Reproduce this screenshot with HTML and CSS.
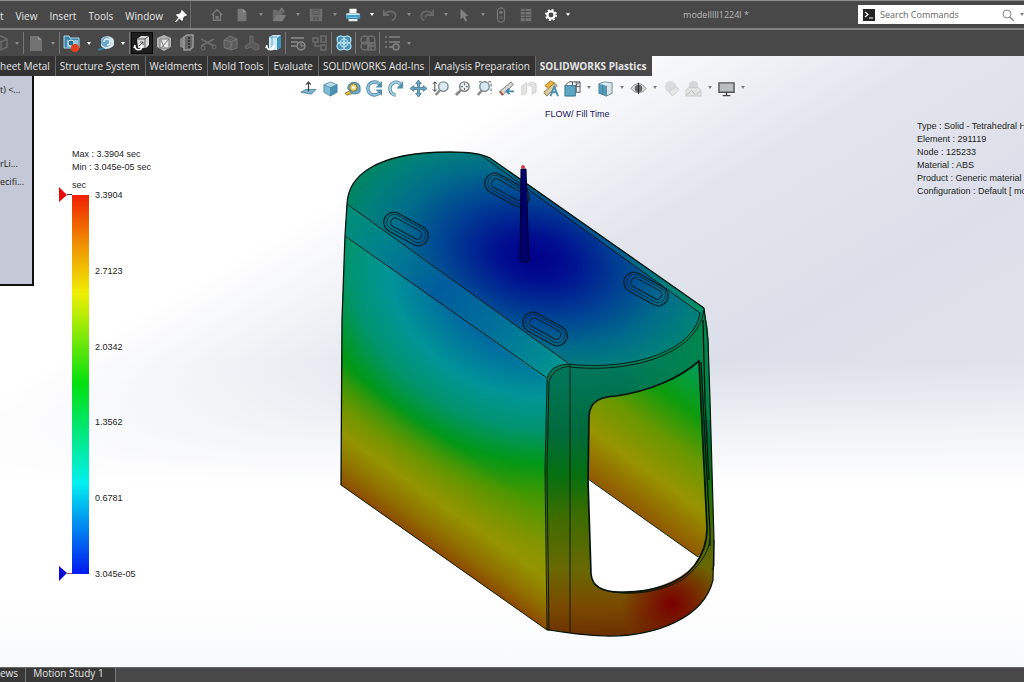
FILE: index.html
```html
<!DOCTYPE html>
<html lang="en">
<head>
  <meta charset="UTF-8">
  <meta name="viewport" content="width=device-width, initial-scale=1.0">
  <title>SOLIDWORKS Plastics</title>
  <link rel="stylesheet" href="styles.css">
</head>
<body>
  <header class="menubar">
    <nav class="menus">
      <a href="#">t</a>
      <a href="#">View</a>
      <a href="#">Insert</a>
      <a href="#">Tools</a>
      <a href="#">Window</a>
      <button class="pin" aria-label="Pin menu"><svg viewBox="0 0 12 12"><path d="M7 0l5 5-1 1-1-.3L8 8v2l-1 1-2.500-2.500L1 12l-1-.2L3.500 7.500 1 5l1-1h2l2.300-2L6 1z" fill="#fff"/></svg></button>
    </nav>
    <div class="quick">
      <div class="group home">
        <button class="icon" aria-label="Home"><svg viewBox="0 0 18 18"><path d="M3 9l6-6 6 6M5 8v7h3v-4h2v4h3V8" fill="none" stroke="#7a7a7a" stroke-width="1.500"/></svg></button>
      </div>
      <div class="group">
        <button class="icon" aria-label="New"><svg viewBox="0 0 18 18"><path d="M4 2h6l4 4v10H4z" fill="#777"/><path d="M10 2v4h4" fill="#999"/></svg></button>
        <button class="caret" aria-label="New options"></button>
        <button class="icon" aria-label="Open"><svg viewBox="0 0 18 18"><path d="M2 3h5l1 2h5v4H5l-3 6z" fill="#6a6a6a"/><path d="M5 9h12l-4 7H2z" fill="#7c7c7c"/><path d="M9 6l3-4 3 4" fill="none" stroke="#777" stroke-width="2"/></svg></button>
        <button class="caret" aria-label="Open options"></button>
        <button class="icon" aria-label="Save"><svg viewBox="0 0 18 18"><path d="M2 2h14v14H2z" fill="#6e6e6e"/><path d="M5 3h8v6H5zM6 11h6v4H6z" fill="#555"/><path d="M6 5h6M6 7h6M9 12v3" stroke="#7a7a7a"/></svg></button>
        <button class="caret" aria-label="Save options"></button>
        <button class="icon" aria-label="Print"><svg viewBox="0 0 18 18"><path d="M5 2h8v5H5z" fill="#fff"/><path d="M2 7h14l1 2H1z" fill="#cfe6f2"/><path d="M1 9h16v4H1z" fill="#3fa0cc"/><path d="M4 12h10v4H4z" fill="#e8f4fa"/><path d="M4 13h10" stroke="#246a8c"/></svg></button>
        <button class="caret on" aria-label="Print options"></button>
        <button class="icon" aria-label="Undo"><svg viewBox="0 0 18 18"><path d="M2 3v6h6M3 8c3-4 10-4 12 0 1 3-1 6-4 7" fill="none" stroke="#6c6c6c" stroke-width="2"/></svg></button>
        <button class="caret" aria-label="Undo options"></button>
        <button class="icon" aria-label="Redo"><svg viewBox="0 0 18 18"><path d="M16 3v6h-6M15 8C12 4 5 4 3 8c-1 3 0 6 3 7M7 12c0-3 3-4 6-3" fill="none" stroke="#686868" stroke-width="2"/></svg></button>
        <button class="caret" aria-label="Redo options"></button>
        <button class="icon" aria-label="Select"><svg viewBox="0 0 18 18"><path d="M5 2l9 8-4 .5 2.500 5-2 1-2.500-5L5 14z" fill="#828282"/></svg></button>
        <button class="caret" aria-label="Select options"></button>
      </div>
      <div class="group spaced">
        <button class="icon" aria-label="Rebuild"><svg viewBox="0 0 18 18"><rect x="5" y="1" width="8" height="16" rx="4" fill="none" stroke="#747474" stroke-width="1.500"/><circle cx="9" cy="6" r="2" fill="#747474"/><circle cx="9" cy="12" r="2" fill="#5e5e5e"/></svg></button>
        <button class="icon" aria-label="File properties"><svg viewBox="0 0 18 18"><path d="M3 2h12v14H3z" fill="#747474"/><path d="M3 5h12M3 9h12M3 12h12M8 2v14" stroke="#484848"/></svg></button>
        <button class="icon" aria-label="Options"><svg viewBox="0 0 18 18"><circle cx="9" cy="9" r="4" fill="none" stroke="#fff" stroke-width="2.500"/><circle cx="9" cy="9" r="5.700" fill="none" stroke="#fff" stroke-width="2" stroke-dasharray="2.240 2.240"/></svg></button>
      </div>
      <button class="caret on" aria-label="Options list"></button>
    </div>
    <h1 class="doc-name">modelllll1224l *</h1>
    <form class="search">
      <svg class="prompt" viewBox="0 0 12 12"><path d="M0 0h12v12H0z" fill="#222"/><path d="M2 3l3 2.500L2 8M6 9h4" fill="none" stroke="#fff" stroke-width="1.200"/></svg>
      <input type="text" placeholder="Search Commands" aria-label="Search Commands">
      <button type="button" class="find" aria-label="Search"><svg viewBox="0 0 12 12"><circle cx="5" cy="5" r="4" fill="none" stroke="#888"/><path d="M8 8l4 4" stroke="#888" stroke-width="1.500"/></svg></button>
      <button type="button" class="caret dark" aria-label="Search options"></button>
    </form>
  </header>

  <div class="ribbon">
    <button class="icon" aria-label="Study"><svg viewBox="0 0 18 18"><path d="M4 5l6-3 6 3v8l-6 3-6-3zM4 5l6 3 6-3M10 8v8" fill="none" stroke="#6a6a6a" stroke-width="1.500"/></svg></button>
    <button class="caret" aria-label="Study options"></button>
    <span class="sep"></span>
    <button class="icon" aria-label="New study"><svg viewBox="0 0 18 18"><path d="M3 2h8l4 4v11H3z" fill="#727272"/><path d="M11 2v4h4" fill="#909090"/></svg></button>
    <button class="caret" aria-label="New study options"></button>
    <span class="sep"></span>
    <button class="icon" aria-label="Capture"><svg viewBox="0 0 18 18"><path d="M1 2h5l1 2h9v10H1z" fill="#3f87a8"/><path d="M1 2h5l1 2h9v10H1z" fill="none" stroke="#a8d8ec"/><path d="M4 6h11v7H4z" fill="#8cc4dc"/><circle cx="8" cy="9" r="3" fill="#286c8e" stroke="#d6edf6"/><circle cx="12" cy="14" r="4" fill="#e8401c"/></svg></button>
    <button class="caret on" aria-label="Capture options"></button>
    <button class="icon" aria-label="Measure"><svg viewBox="0 0 18 18"><path d="M1 16l6-2" stroke="#2e7fa5" stroke-width="2"/><path d="M4 12V6c1-5 12-5 13 1v4c-2 3-6 4-9 4z" fill="#d4e6ee"/><circle cx="9" cy="8" r="5" fill="#68a8c8"/><path d="M7 8a3 3 0 1 1 3 3" fill="none" stroke="#e8f4fa" stroke-width="1.500"/></svg></button>
    <button class="caret on" aria-label="Measure options"></button>
    <span class="sep"></span>
    <button class="icon pressed" aria-label="Solid mesh"><svg viewBox="0 0 18 18"><path d="M4 5l4-3h8v9l-3 3H5z" fill="#d8d8d8"/><path d="M4 5h8v9M12 5l4-3M7 8h3v3M10 8l-4 4" fill="none" stroke="#555"/><path d="M2 12c0 5 7 5 7 0l-2 1M2 11l-1 3" fill="none" stroke="#fff" stroke-width="1.500"/></svg></button>
    <button class="icon" aria-label="Shell mesh"><svg viewBox="0 0 18 18"><path d="M2 4l7-3 7 3v9l-7 4-7-4z" fill="#b4b4b4"/><path d="M5 5h9v9H5z" fill="#e6e6e6" stroke="#777"/><path d="M6 14l8-9M6 6l3 7" fill="none" stroke="#777"/></svg></button>
    <button class="icon" aria-label="Insert"><svg viewBox="0 0 18 18"><path d="M3 5l6-4v14l-6-2z" fill="#858585"/><path d="M7 3l3-2h6v12l-3 3H7z" fill="#666" stroke="#999" stroke-width="1.500"/><path d="M12 3v12" stroke="#333" stroke-width="2" stroke-dasharray="2 1"/></svg></button>
    <button class="icon" aria-label="Cut"><svg viewBox="0 0 18 18"><path d="M2 5l13 7M2 12l13-7" stroke="#6e6e6e" stroke-width="1.500"/><circle cx="4" cy="14" r="2" fill="none" stroke="#6e6e6e"/><circle cx="15" cy="13" r="2" fill="none" stroke="#6e6e6e"/></svg></button>
    <button class="icon" aria-label="Cavity"><svg viewBox="0 0 18 18"><path d="M3 6l6-4 7 3v9l-6 2-7-3z" fill="#5c5c5c" stroke="#747474"/><path d="M3 6l7 2 6-3M10 8v8M3 13c2 3 5 2 6 0" fill="none" stroke="#7c7c7c"/></svg></button>
    <button class="icon" aria-label="Runner"><svg viewBox="0 0 18 18"><path d="M7 2h3v6l6 3v4l-4 1-4-3-5 2-1-3 5-3z" fill="#5a5a5a" stroke="#6a6a6a"/></svg></button>
    <button class="icon" aria-label="Flow"><svg viewBox="0 0 18 18"><path d="M4 3l4-2h8v12l-4 3H4z" fill="#cfe9f5"/><path d="M12 4l4-3v12l-4 3z" fill="#3c94bd"/><path d="M7 3v10M4 3h8" stroke="#5ba7c8"/><path d="M2 12c0 5 7 5 7 0l-2 1M2 11l-1 3" fill="none" stroke="#fff" stroke-width="1.500"/></svg></button>
    <span class="sep"></span>
    <button class="icon" aria-label="Batch"><svg viewBox="0 0 18 18"><path d="M2 4h13M2 8h7M2 12h5" stroke="#7c7c7c" stroke-width="2"/><circle cx="12" cy="12" r="4" fill="#505050" stroke="#8c8c8c" stroke-width="1.500"/><path d="M12 9v3h3" stroke="#8c8c8c" fill="none"/></svg></button>
    <button class="icon" aria-label="Compare"><svg viewBox="0 0 18 18"><path d="M2 4h5v4H2zM10 2h5v6h-5zM10 11h5v5h-5zM4 8v4h6" fill="none" stroke="#6c6c6c" stroke-width="1.500"/></svg></button>
    <span class="sep"></span>
    <button class="icon" aria-label="Flow results"><svg viewBox="0 0 18 18"><path d="M1 3l4-2 4 1 4-1 4 3-1 5 1 5-4 3-4-1-5 1-3-4 1-4z" fill="#4d8fae"/><g fill="none" stroke="#b5dff0"><circle cx="6" cy="6" r="4"/><circle cx="12" cy="6" r="4"/><circle cx="6" cy="12" r="4"/><circle cx="12" cy="12" r="4"/><circle cx="9" cy="9" r="4"/></g></svg></button>
    <span class="sep"></span>
    <button class="icon" aria-label="Pack results"><svg viewBox="0 0 18 18"><g fill="none" stroke="#707070" stroke-width="1.500"><circle cx="6" cy="6" r="4"/><circle cx="12" cy="6" r="4"/><circle cx="6" cy="12" r="4"/><path d="M9 9h7v7H9zM9 12h7M12 9v7"/></g></svg></button>
    <span class="sep"></span>
    <button class="icon" aria-label="Report"><svg viewBox="0 0 18 18"><path d="M2 3h2M6 3h11M2 8h2M6 8h11M2 13h2M6 13h4" stroke="#747474" stroke-width="2"/><circle cx="13" cy="13" r="3" fill="#505050" stroke="#808080" stroke-width="1.500"/></svg></button>
    <button class="caret" aria-label="Report options"></button>
  </div>

  <main class="stage">
    <nav class="tabs">
      <a href="#">heet Metal</a>
      <a href="#">Structure System</a>
      <a href="#">Weldments</a>
      <a href="#">Mold Tools</a>
      <a href="#">Evaluate</a>
      <a href="#">SOLIDWORKS Add-Ins</a>
      <a href="#">Analysis Preparation</a>
      <a href="#" class="active">SOLIDWORKS Plastics</a>
    </nav>

    <div class="viewport">
      <aside class="tree">
        <p>t) &lt;...</p>
        <p>rLi...</p>
        <p>ecifi...</p>
      </aside>

      <section class="legend">
        <p>Max : 3.3904 sec</p>
        <p>Min : 3.045e-05 sec</p>
        <p class="unit">sec</p>
        <div class="scale">
          <div class="marks">
            <svg viewBox="0 0 13 12"><path d="M0-2l8 8-8 7z" fill="#e80808"/><path d="M8 5.500h5" stroke="#333"/></svg>
            <svg viewBox="0 0 13 12"><path d="M0-2l8 7-8 8z" fill="#0808d8"/><path d="M8 5.500h5" stroke="#a04050"/></svg>
          </div>
          <div class="bar"></div>
          <ol class="ticks">
            <li>3.3904</li>
            <li>2.7123</li>
            <li>2.0342</li>
            <li>1.3562</li>
            <li>0.6781</li>
            <li>3.045e-05</li>
          </ol>
        </div>
      </section>

      <section class="scene">
        <div class="view-tools">
          <button class="icon" aria-label="Normal to"><svg viewBox="0 0 18 18"><path d="M1 13l5-3h11l-5 5z" fill="#7fb4cc" stroke="#4c8aa8"/><path d="M9 12V2M6.500 5L9 2l2.500 3" fill="none" stroke="#444" stroke-width="1.300"/></svg></button>
          <button class="icon" aria-label="Isometric"><svg viewBox="0 0 18 18"><path d="M2 5l7-3 7 3-7 3z" fill="#b5dcec"/><path d="M2 5l7 3v9l-7-4z" fill="#7dbdd8"/><path d="M16 5L9 8v9l7-4z" fill="#4a93b4"/><path d="M2 5l7-3 7 3v8l-7 4-7-4zM2 5l7 3 7-3M9 8v9" fill="none" stroke="#39738f" stroke-width=".7"/></svg></button>
          <button class="icon" aria-label="Measure"><svg viewBox="0 0 18 18"><path d="M1 14l6-3 3 3-7 2z" fill="#e8c050" stroke="#94792c"/><path d="M4 9c0-9 13-8 13-1v4c-1 3-7 3-9 2z" fill="#6ba9c5" stroke="#3f7c9a"/><circle cx="10" cy="8" r="4" fill="#e9cf6d" stroke="#866d27"/><circle cx="10" cy="8" r="1.500" fill="#fff"/></svg></button>
          <button class="icon" aria-label="Roll view"><svg viewBox="0 0 18 18"><path d="M14 4C9 0 2 3 2 9s7 9 12 5" fill="none" stroke="#477f9b" stroke-width="3.500"/><path d="M14 4C9 0 2 3 2 9s7 9 12 5" fill="none" stroke="#8ec2d9" stroke-width="2"/><path d="M17 1v7h-7zM17 17v-7h-7z" fill="#5391ae"/></svg></button>
          <button class="icon" aria-label="Rotate view"><svg viewBox="0 0 18 18"><path d="M13 4C8 0 2 4 2 9c0 4 3 7 6 7" fill="none" stroke="#477f9b" stroke-width="3.500"/><path d="M13 4C8 0 2 4 2 9c0 4 3 7 6 7" fill="none" stroke="#a5d3e6" stroke-width="2"/><path d="M16 1v8H9z" fill="#5391ae"/></svg></button>
          <button class="icon" aria-label="Pan"><svg viewBox="0 0 18 18"><path d="M9 0l3 4h-2v4h4V6l4 3-4 3v-2h-4v4h2l-3 4-3-4h2v-4H4v2L0 9l4-3v2h4V4H6z" fill="#6baac7" stroke="#356b86" stroke-width=".8"/></svg></button>
          <button class="icon" aria-label="Zoom in/out"><svg viewBox="0 0 18 18"><path d="M3 2v10M1 4l2-2 2 2M1 10l2 2 2-2" fill="none" stroke="#333"/><circle cx="12" cy="7" r="5" fill="#dcecf4" stroke="#7c8c94" stroke-width="1.500"/><path d="M8 11l-4 5" stroke="#888" stroke-width="2.500"/></svg></button>
          <button class="icon" aria-label="Zoom to fit"><svg viewBox="0 0 18 18"><circle cx="11" cy="7" r="5" fill="#e8f0f4" stroke="#777" stroke-width="1.500"/><path d="M11 3.500v7M7.500 7h7" stroke="#444" stroke-dasharray="2 3"/><path d="M7 11l-5 5" stroke="#888" stroke-width="3"/></svg></button>
          <button class="icon" aria-label="Zoom to area"><svg viewBox="0 0 18 18"><path d="M3 2h13v13" fill="none" stroke="#555" stroke-dasharray="3 2"/><circle cx="9" cy="7" r="5" fill="#d7e9f2" stroke="#7c8c94" stroke-width="1.500"/><path d="M6 11l-4 5" stroke="#888" stroke-width="2.500"/></svg></button>
          <button class="icon" aria-label="Previous view"><svg viewBox="0 0 18 18"><path d="M2 12L14 2l2 3L5 16z" fill="#d8d4d0" stroke="#777"/><path d="M2 12l3 4" stroke="#b0503c" stroke-width="2"/><path d="M17 12h-7M12 9l-3 3 3 3" fill="none" stroke="#3f88aa" stroke-width="2"/></svg></button>
          <button class="icon faded" aria-label="Section view"><svg viewBox="0 0 18 18"><path d="M2 6l5-3v11l-5 2zM8 5l4-3 5 2v9l-4 2V7z" fill="#d8d8d8" stroke="#bbb"/></svg></button>
          <button class="icon" aria-label="Dynamic annotation"><svg viewBox="0 0 18 18"><path d="M2 13L13 3l3 3L5 17z" fill="#dccba4" stroke="#7e693b"/><path d="M3 6l6-5 4 2-6 6z" fill="#e8b23c" stroke="#a87c28"/><path d="M9 17l4-10 4 10M11 13h5" fill="none" stroke="#4d91b0" stroke-width="2"/></svg></button>
          <button class="icon" aria-label="View orientation"><svg viewBox="0 0 18 18"><path d="M5 2h12v11h-5" fill="#eef3f5" stroke="#555"/><path d="M9 2v5M13 2v11M12 7h5" stroke="#555"/><path d="M1 6h11v11H1z" fill="#5fa5c4" stroke="#34708c"/><path d="M1 6l4-4M12 6l5-4" stroke="#555"/></svg></button>
          <button class="caret dark" aria-label="View orientation options"></button>
          <button class="icon" aria-label="Display style"><svg viewBox="0 0 18 18"><path d="M2 4l6-2 8 1-5 3z" fill="#dceff7"/><path d="M2 4l8 2v11l-8-3z" fill="#4f9cbd"/><path d="M10 6l6-3v11l-6 3z" fill="#d8e3e8"/><path d="M2 4l6-2 8 1v11l-6 3-8-3zM10 6v11M6 5v11" fill="none" stroke="#4c7488" stroke-width=".8"/></svg></button>
          <button class="caret dark" aria-label="Display style options"></button>
          <button class="icon" aria-label="Hide/show items"><svg viewBox="0 0 18 18"><path d="M1 9c5-7 11-7 16 0-5 6-11 6-16 0z" fill="#ddd" stroke="#888"/><circle cx="9" cy="9" r="4" fill="#666"/><path d="M9 3v12" stroke="#222"/></svg></button>
          <button class="caret dark" aria-label="Hide/show options"></button>
          <button class="icon faded" aria-label="Edit appearance"><svg viewBox="0 0 18 18"><circle cx="8" cy="7" r="6" fill="#d2d2d2"/><path d="M6 12l8-5 3 3-7 7z" fill="#e0e0e0" stroke="#bbb"/></svg></button>
          <button class="icon faded" aria-label="Apply scene"><svg viewBox="0 0 18 18"><circle cx="9" cy="6" r="5" fill="#ccc"/><path d="M1 11l3-3h10l3 3v6H1z" fill="#ddd" stroke="#b4b4b4"/><path d="M2 16l5-5 4 5 5-4" fill="none" stroke="#aaa"/></svg></button>
          <button class="caret dark" aria-label="Scene options"></button>
          <button class="icon" aria-label="View settings"><svg viewBox="0 0 18 18"><path d="M1 3h16v10H1z" fill="#b9bfc0" stroke="#555" stroke-width="1.500"/><path d="M9 13v3M5 16.500h8" stroke="#444" stroke-width="1.500"/></svg></button>
          <button class="caret dark" aria-label="View settings options"></button>
        </div>
        <h2 class="plot-title">FLOW/ Fill Time</h2>
        <svg class="model" viewBox="338 150 380 488" role="img" aria-label="Fill time plot">
          <defs>
            <radialGradient id="top" gradientUnits="userSpaceOnUse" cx="0" cy="0" r="1" gradientTransform="translate(534 258) rotate(14) scale(192 122)">
              <stop offset="0" stop-color="#00008a"/>
              <stop offset=".18" stop-color="#000e90"/>
              <stop offset=".48" stop-color="#004494"/>
              <stop offset=".72" stop-color="#006e8a"/>
              <stop offset=".9" stop-color="#00807a"/>
              <stop offset="1" stop-color="#008466"/>
            </radialGradient>
            <radialGradient id="side" gradientUnits="userSpaceOnUse" cx="0" cy="0" r="1" gradientTransform="translate(515 290) rotate(25) scale(344 264)">
              <stop offset="0" stop-color="#0058a0"/>
              <stop offset=".2" stop-color="#0066a0"/>
              <stop offset=".38" stop-color="#009498"/>
              <stop offset=".5" stop-color="#009470"/>
              <stop offset=".62" stop-color="#009818"/>
              <stop offset=".74" stop-color="#429800"/>
              <stop offset=".95" stop-color="#809600"/>
            </radialGradient>
            <linearGradient id="rim" gradientUnits="userSpaceOnUse" x1="440" y1="555" x2="497" y2="474">
              <stop offset="0" stop-color="#8c4a00"/>
              <stop offset=".18" stop-color="#907000"/>
              <stop offset=".42" stop-color="#949400"/>
              <stop offset="1" stop-color="#809600" stop-opacity="0"/>
            </linearGradient>
            <linearGradient id="fillet" gradientUnits="userSpaceOnUse" x1="345" y1="215" x2="560" y2="372">
              <stop offset="0" stop-color="#009078"/>
              <stop offset=".2" stop-color="#00808e"/>
              <stop offset=".45" stop-color="#005c9e"/>
              <stop offset=".7" stop-color="#00709a"/>
              <stop offset="1" stop-color="#009690"/>
            </linearGradient>
            <linearGradient id="edge" gradientUnits="userSpaceOnUse" x1="483" y1="154" x2="705" y2="312">
              <stop offset="0" stop-color="#008078"/>
              <stop offset=".35" stop-color="#004c94"/>
              <stop offset=".6" stop-color="#005c90"/>
              <stop offset="1" stop-color="#009468"/>
            </linearGradient>
            <linearGradient id="front" gradientUnits="userSpaceOnUse" x1="600" y1="365" x2="606" y2="636">
              <stop offset="0" stop-color="#00785c"/>
              <stop offset=".25" stop-color="#006a3c"/>
              <stop offset=".4" stop-color="#047010"/>
              <stop offset=".55" stop-color="#3c6c00"/>
              <stop offset=".75" stop-color="#686800"/>
              <stop offset=".88" stop-color="#7a4c00"/>
              <stop offset="1" stop-color="#6c3000"/>
            </linearGradient>
            <radialGradient id="red" gradientUnits="userSpaceOnUse" cx="672" cy="604" r="50">
              <stop offset="0" stop-color="#780000"/>
              <stop offset="1" stop-color="#780000" stop-opacity="0"/>
            </radialGradient>
            <linearGradient id="lip" gradientUnits="userSpaceOnUse" x1="620" y1="0" x2="710" y2="0">
              <stop offset="0" stop-color="#009040" stop-opacity="0"/>
              <stop offset="1" stop-color="#009040" stop-opacity=".6"/>
            </linearGradient>
            <linearGradient id="inner" gradientUnits="userSpaceOnUse" x1="645" y1="519" x2="735" y2="393">
              <stop offset="0" stop-color="#905800"/>
              <stop offset=".26" stop-color="#989400"/>
              <stop offset=".5" stop-color="#6a9800"/>
              <stop offset=".74" stop-color="#0c9c0c"/>
              <stop offset="1" stop-color="#009c58"/>
            </linearGradient>
            <g id="slot" fill="none" stroke="#00202c">
              <rect x="-24" y="-10" width="48" height="20" rx="10" stroke-width="1.300"/>
              <rect x="-21" y="-8" width="42" height="15" rx="7" stroke-width=".7"/>
              <rect x="-17" y="-5" width="34" height="9" rx="4"/>
            </g>
          </defs>

          <!-- left wall -->
          <path d="M345 236L547 378 545 470 547 630 341 485 342 320z" fill="url(#side)"/>
          <path d="M345 236L547 378 545 470 547 630 341 485 342 320z" fill="url(#rim)"/>
          <!-- top -->
          <path d="M347 204C348 178 372 152 450 152 468 152 482 154 490 158L704 308C700 350 630 374 568 366z" fill="url(#top)"/>
          <path d="M347 204L569 364Q550 364 547 380L345 236z" fill="url(#fillet)"/>
          <path d="M482 155L490 158 704 308 700 313z" fill="url(#edge)"/>
          <!-- inside wall seen through the opening -->
          <path d="M587 395L702 358 709 565 587 478z" fill="url(#inner)"/>
          <!-- front frame -->
          <g fill-rule="evenodd">
            <path d="M547 380Q549 364 568 364C630 372 696 351 701 313L704 308 708 330 714 540 713 580C704 618 655 637 605 636 585 636 565 632 547 630L545 470zM589 416C590 400 602 397 616 396 650 391 680 378 699 361L707 528C707 545 702 556 694 566 680 584 650 593 620 592 602 592 592 586 591 574L588 480z" fill="url(#front)"/>
            <path d="M568 365C630 372 698 350 704 308L708 330 710 420 702 420 699 361C680 378 650 391 616 396z" fill="url(#lip)"/>
            <path d="M713 580C704 618 655 637 605 636L610 592C650 595 690 580 704 550L713 530z" fill="url(#red)"/>
          </g>

          <g fill="none" stroke="#04140c" stroke-width=".9">
            <path d="M341 485L342 320 345 236 347 204C348 178 372 152 450 152 468 152 482 154 490 158L704 308" stroke-width="1.300"/>
            <path d="M341 485L547 630"/>
            <path d="M347 204L568 363M345 236L547 378M482 156L700 313"/>
            <path d="M547 630L545 470 547 380Q549 365 568 364M549 630L547 470 549 382Q552 368 570 366"/>
            <path d="M570 364V633"/>
            <path d="M568 364C630 371 694 352 700 313M570 367C636 374 698 352 704 310"/>
            <path d="M547 630C565 632 585 636 605 636 655 637 704 618 713 580L714 540 710 400 708 340 704 308" stroke-width="1.200"/>
            <path d="M701 362L705 440 710 530V546M703 320L705 400 709 480" stroke-width="1.300"/>
            <path d="M589 416C590 400 602 397 616 396 650 391 680 378 699 361L707 528C707 545 702 556 694 566 680 584 650 593 620 592 602 592 592 586 591 574L588 480z" stroke-width="1.700"/>
            <path d="M588 479L698 557"/>
            <path d="M594 584C606 596 650 598 682 580 698 568 708 554 710 540"/>
            <path d="M714 540V566L712 570"/>
          </g>

          <use href="#slot" transform="translate(406 229) rotate(29)"/>
          <use href="#slot" transform="translate(507 190) rotate(29)"/>
          <use href="#slot" transform="translate(646 289) rotate(29)"/>
          <use href="#slot" transform="translate(545 329) rotate(29)"/>

          <!-- sprue and injection point -->
          <path d="M521 169H526L529 262H520z" fill="#000068" stroke="#000030" stroke-width="1"/>
          <path d="M523 165v4M521 167h4" stroke="#e02020" stroke-width="1.500"/>
        </svg>
      </section>

      <section class="info">
        <p>Type : Solid - Tetrahedral H</p>
        <p>Element : 291119</p>
        <p>Node : 125233</p>
        <p>Material : ABS</p>
        <p>Product : Generic material</p>
        <p>Configuration : Default [ mo</p>
      </section>
    </div>
  </main>

  <footer class="sheets">
    <a href="#">ews</a>
    <a href="#">Motion Study 1</a>
  </footer>
</body>
</html>
```

FILE: styles.css
```css
* {
  box-sizing: border-box;
}
body {
  margin: 0;
  min-height: 100vh;
  display: flex;
  flex-direction: column;
  overflow: hidden;
  font-family: "Open Sans", "Noto Sans", sans-serif;
  font-size: 10px;
  color: #e4e4e4;
  background-color: #484848;
}
h1, h2, p, ol {
  margin: 0;
  padding: 0;
  font-size: inherit;
  font-weight: normal;
}
a {
  color: inherit;
  text-decoration: none;
}
button {
  padding: 0;
  border: 0;
  background: none;
}

/* shared toolbar parts */
.icon {
  flex: none;
  width: 22px;
  height: 22px;
  display: flex;
  align-items: center;
  justify-content: center;
}
.icon svg {
  width: 18px;
  height: 18px;
}
.icon.pressed {
  background-color: #1e1e1e;
  border: 1px solid #0a0a0a;
}
.icon.faded {
  opacity: 0.7;
}
.caret {
  flex: none;
  width: 12px;
  height: 20px;
  display: flex;
  align-items: center;
  justify-content: center;
  color: #8a8a8a;
}
.caret::after {
  content: "";
  border: 2px solid transparent;
  border-top: 3px solid currentColor;
  border-bottom: 0;
}
.caret.on {
  color: #fff;
}
.caret.dark {
  color: #808080;
}

/* menu bar */
.menubar {
  display: flex;
  align-items: center;
  height: 30px;
  border-top: 1px solid #8c9090;
  border-bottom: 2px solid #808080;
}
.menus {
  flex: none;
  width: 191px;
  height: 100%;
  display: flex;
  align-items: center;
  gap: 12px;
  padding-top: 2px;
  border-right: 1px solid #6c6c6c;
}
.pin {
  width: 12px;
  height: 12px;
}
.pin svg {
  display: block;
}
.quick {
  flex: none;
  display: flex;
  align-items: center;
  padding-left: 15px;
}
.group {
  display: flex;
  align-items: center;
}
.group.home {
  margin-right: 3px;
}
.group.spaced {
  gap: 3px;
}
.group .caret {
  width: 15px;
}
.group svg {
  width: 16px;
  height: 16px;
}
.doc-name {
  flex: 1;
  text-align: center;
  font-size: 9px;
  color: #b8b8b8;
}
.search {
  flex: none;
  width: 166px;
  height: 19px;
  display: flex;
  align-items: center;
  gap: 5px;
  padding-left: 5px;
  overflow: hidden;
  background-color: #fff;
}
.prompt {
  flex: none;
  width: 12px;
  height: 12px;
}
.search input {
  flex: 1;
  min-width: 0;
  border: 0;
  padding: 0;
  font: inherit;
  font-size: 9px;
  color: #555;
  background: none;
}
.search input::placeholder {
  color: #666;
}
.find {
  width: 12px;
  height: 12px;
}
.find svg {
  display: block;
}
.search .caret {
  width: 5px;
}

/* command ribbon */
.ribbon {
  display: flex;
  align-items: center;
  height: 26px;
  margin-left: -11px;
}
.sep {
  flex: none;
  width: 1px;
  height: 22px;
  margin-right: 1px;
  background-color: #777;
}

/* graphics area */
.stage {
  flex: 1;
  display: flex;
  flex-direction: column;
  color: #1c1c1c;
  background:
    linear-gradient(to bottom, rgba(255, 255, 255, 0) 50%, #fff 70%, #fff 88%, #f8f9fb 100%),
    linear-gradient(150deg, #fff 28%, #e3e5ee 45%, #dcdfe9 60%, #e6e8f0 100%);
}
.tabs {
  display: flex;
  height: 20px;
}
.tabs a {
  display: flex;
  align-items: center;
  padding: 0 5px 1px 4px;
  color: #e4e4e4;
  background-color: #333;
  border-right: 1px solid #666;
}
.tabs a:first-child {
  padding-left: 0;
}
.tabs a.active {
  font-weight: bold;
  background-color: #484848;
  border-right: 0;
}
.viewport {
  flex: 1;
  display: flex;
  align-items: flex-start;
  font-family: "Liberation Sans", Arial, sans-serif;
  font-size: 9px;
  line-height: 13px;
}
.tree {
  flex: none;
  width: 34px;
  height: 210px;
  display: flex;
  flex-direction: column;
  gap: 5px;
  padding-top: 7px;
  overflow: hidden;
  white-space: nowrap;
  font-family: "Open Sans", "Noto Sans", sans-serif;
  background-color: #c5c8d6;
  border-right: 2px solid #111;
  border-bottom: 2px solid #111;
}
.tree p:first-child {
  margin-bottom: 56px;
}
.legend {
  flex: none;
  width: 263px;
  padding: 72px 0 0 38px;
}
.legend .unit {
  margin-top: 5px;
}
.scale {
  display: flex;
  height: 391px;
  margin: -3px 0 0 -13px;
}
.marks, .ticks {
  display: flex;
  flex-direction: column;
  justify-content: space-between;
  list-style: none;
  line-height: 12px;
}
.marks svg {
  display: block;
  width: 13px;
  height: 12px;
  overflow: visible;
}
.bar {
  width: 17px;
  margin: 6px 6px 6px 0;
  background: linear-gradient(to bottom, #f02000, #f09000 13%, #f0f000 26%, #00e010 50%, #00f0f0 76%, #0020f0 99%);
}
.scene {
  flex: 1;
  min-width: 0;
}
.view-tools {
  display: flex;
  padding-top: 1px;
}
.view-tools .caret {
  width: 11px;
}
.view-tools svg {
  width: 17px;
  height: 17px;
}
.plot-title {
  padding: 9px 0 0 248px;
  color: #16165c;
}
.model {
  display: block;
  width: 380px;
  margin: 29px 0 0 41px;
}
.info {
  flex: none;
  width: 107px;
  padding-top: 44px;
  overflow: hidden;
  white-space: nowrap;
}

/* bottom tabs */
.sheets {
  display: flex;
  height: 15px;
  border-top: 1px solid #666;
  line-height: 11px;
}
.sheets a {
  padding: 0 11px 0 7px;
  background-color: #383838;
  border-right: 1px solid #777;
}
.sheets a:first-child {
  padding: 0 7px 0 0;
}
```
